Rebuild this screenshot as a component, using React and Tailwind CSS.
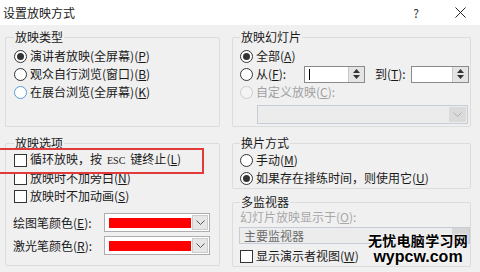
import React from "react";

const U = ({ k }) => (
  <>
    (<span className="underline underline-offset-[1px]">{k}</span>)
  </>
);

const Radio = ({ checked, disabled, hover }) => (
  <span
    className={
      "w-[13px] h-[13px] rounded-full border flex items-center justify-center shrink-0 " +
      (disabled
        ? "border-[#cccccc] bg-[#f4f4f4]"
        : hover
        ? "border-[#5a9bd5] bg-white"
        : "border-[#333333] bg-white")
    }
  >
    {checked && <span className="w-[7px] h-[7px] rounded-full bg-[#333333]" />}
  </span>
);

const Check = () => (
  <span className="w-[13px] h-[13px] border border-[#333333] bg-white shrink-0" />
);

const Chevron = ({ color = "#555" }) => (
  <svg width="9" height="5" viewBox="0 0 9 5">
    <path d="M0.5 0.5 L4.5 4.5 L8.5 0.5" fill="none" stroke={color} strokeWidth="1" />
  </svg>
);

const Spin = ({ w, caret }) => (
  <div className={"h-[17px] border border-[#8a8a8a] bg-white flex " + w}>
    <div className="flex-1 flex items-center pl-[4px]">
      {caret && <div className="w-px h-[11px] bg-black" />}
    </div>
    <div className="w-[16px] bg-[#e4e4e4] border-l border-[#c8c8c8] flex flex-col items-center justify-center gap-[2px]">
      <svg width="7" height="4" viewBox="0 0 7 4">
        <path d="M0 4 L3.5 0 L7 4 Z" fill="#333" />
      </svg>
      <svg width="7" height="4" viewBox="0 0 7 4">
        <path d="M0 0 L3.5 4 L7 0 Z" fill="#333" />
      </svg>
    </div>
  </div>
);

const ColorDrop = () => (
  <div className="w-[106px] h-[19px] border border-[#adadad] bg-white flex items-center pl-[4px] pr-[1px]">
    <div className="w-[82px] h-[10px] bg-[#ff0000]" />
    <div className="ml-auto w-[16px] h-[15px] bg-[#e6e6e6] border border-[#cccccc] flex items-center justify-center">
      <Chevron />
    </div>
  </div>
);

const Title = ({ children, cls = "-mt-[9px] h-[16px] leading-[16px]" }) => (
  <div className={"flex " + cls}>
    <span className="bg-[#f0f0f0] px-[1px]">{children}</span>
  </div>
);

const Row = ({ children, cls = "", gap = "gap-[3px]" }) => (
  <div className={"h-[18px] flex items-center " + gap + " " + cls}>{children}</div>
);

export default function App() {
  return (
    <div className="w-[480px] h-[272px] overflow-hidden bg-[#f0f0f0] relative font-['Noto_Sans_CJK_SC','Noto_Sans',sans-serif] text-[12px] leading-[16px] text-[#1a1a1a]">
      {/* title bar */}
      <div className="h-[25px] bg-white flex items-center">
        <span className="pl-[3px]">设置放映方式</span>
        <div className="ml-auto w-[48px] flex justify-center text-[#333]">?</div>
        <div className="w-[40px] flex justify-center">
          <svg width="11" height="11" viewBox="0 0 11 11">
            <path d="M0.5 0.5 L10.5 10.5 M10.5 0.5 L0.5 10.5" stroke="#222" strokeWidth="1" />
          </svg>
        </div>
      </div>

      {/* top row */}
      <div className="flex pl-[5px] pt-[12px] gap-[12px]">
        <div className="w-[215px] border border-[#dcdcdc] rounded-[2px] pl-[8px]">
          <Title>放映类型</Title>
          <div className="mt-[2px]">
            <Row>
              <Radio checked />
              <span>演讲者放映(全屏幕)<U k="P" /></span>
            </Row>
            <Row>
              <Radio />
              <span>观众自行浏览(窗口)<U k="B" /></span>
            </Row>
            <Row>
              <Radio hover />
              <span>在展台浏览(全屏幕)<U k="K" /></span>
            </Row>
          </div>
        </div>

        <div className="w-[239px] border border-[#dcdcdc] rounded-[2px] pl-[7px] pb-[2px]">
          <Title>放映幻灯片</Title>
          <div className="mt-[2px]">
            <Row>
              <Radio checked />
              <span>全部<U k="A" /></span>
            </Row>
            <Row gap="gap-0">
              <Radio />
              <span className="w-[51px] pl-[3px]">从<U k="F" />:</span>
              <Spin w="w-[61px]" caret />
              <span className="w-[36px] ml-[10px]">到<U k="T" />:</span>
              <Spin w="w-[58px]" />
            </Row>
            <Row>
              <Radio disabled />
              <span className="text-[#a0a0a0]">自定义放映<U k="C" />:</span>
            </Row>
            <div className="mt-[4px] ml-[17px] w-[211px] h-[19px] border border-[#c6cdd7] bg-[#ececec] flex justify-end p-px">
              <div className="w-[17px] bg-[#dadada] flex items-center justify-center">
                <Chevron color="#b0b0b0" />
              </div>
            </div>
          </div>
        </div>
      </div>

      {/* bottom row */}
      <div className="flex pl-[5px] mt-[16px] gap-[12px] items-start">
        <div className="w-[215px] border border-[#dcdcdc] rounded-[2px] pl-[8px] pb-[10px]">
          <Title>放映选项</Title>
          <Row>
            <Check />
            <span>
              循环放映，按
              <span className="font-['Liberation_Serif',serif] text-[10px] mx-[5px]">ESC</span>
              键终止<U k="L" />
            </span>
          </Row>
          <Row>
            <Check />
            <span>放映时不加旁白<U k="N" /></span>
          </Row>
          <Row>
            <Check />
            <span>放映时不加动画<U k="S" /></span>
          </Row>
          <div className="mt-[8px] flex items-center">
            <span className="w-[91px] -ml-[1px]">绘图笔颜色<U k="E" />:</span>
            <ColorDrop />
          </div>
          <div className="mt-[4px] flex items-center">
            <span className="w-[91px] -ml-[1px]">激光笔颜色<U k="R" />:</span>
            <ColorDrop />
          </div>
        </div>

        <div className="w-[239px] flex flex-col">
          <div className="border border-[#dcdcdc] rounded-[2px] pl-[7px] pb-[1px]">
            <Title>换片方式</Title>
            <Row>
              <Radio />
              <span>手动<U k="M" /></span>
            </Row>
            <Row>
              <Radio checked />
              <span>如果存在排练时间，则使用它<U k="U" /></span>
            </Row>
          </div>
          <div className="mt-[13px] border border-[#dcdcdc] rounded-[2px] pl-[7px] pb-[1px]">
            <Title cls="-mt-[8px] h-[14px] leading-[14px]">多监视器</Title>
            <div className="mt-[1px] h-[14px] leading-[14px] text-[#a8a8a8]">
              幻灯片放映显示于<U k="O" />:
            </div>
            <div className="mt-[3px] -ml-[1px] w-[231px] h-[17px] border border-[#c6cdd7] bg-[#ececec] flex items-center">
              <span className="pl-[4px] text-[#6b6b6b]">主要监视器</span>
              <div className="ml-auto w-[17px] h-full bg-[#d6d6d6]" />
            </div>
            <Row cls="mt-[3px]">
              <Check />
              <span>显示演示者视图<U k="W" /></span>
            </Row>
          </div>
        </div>
      </div>

      {/* red highlight */}
      <div className="absolute left-[-3px] top-[148px] w-[207px] h-[26px] border-[2px] border-[#e23a3a]" />

      {/* watermark */}
      <div className="absolute left-[366px] top-[231px] w-[104px] flex flex-col items-center text-black font-bold [text-shadow:0_0_2px_white,0_0_2px_white]">
        <div className="text-[14px] leading-[18px] tracking-[0.3px]">无忧电脑学习网</div>
        <div className="font-['Liberation_Sans',Arial,sans-serif] text-[16px] leading-[16px]">wypcw.com</div>
      </div>
    </div>
  );
}
